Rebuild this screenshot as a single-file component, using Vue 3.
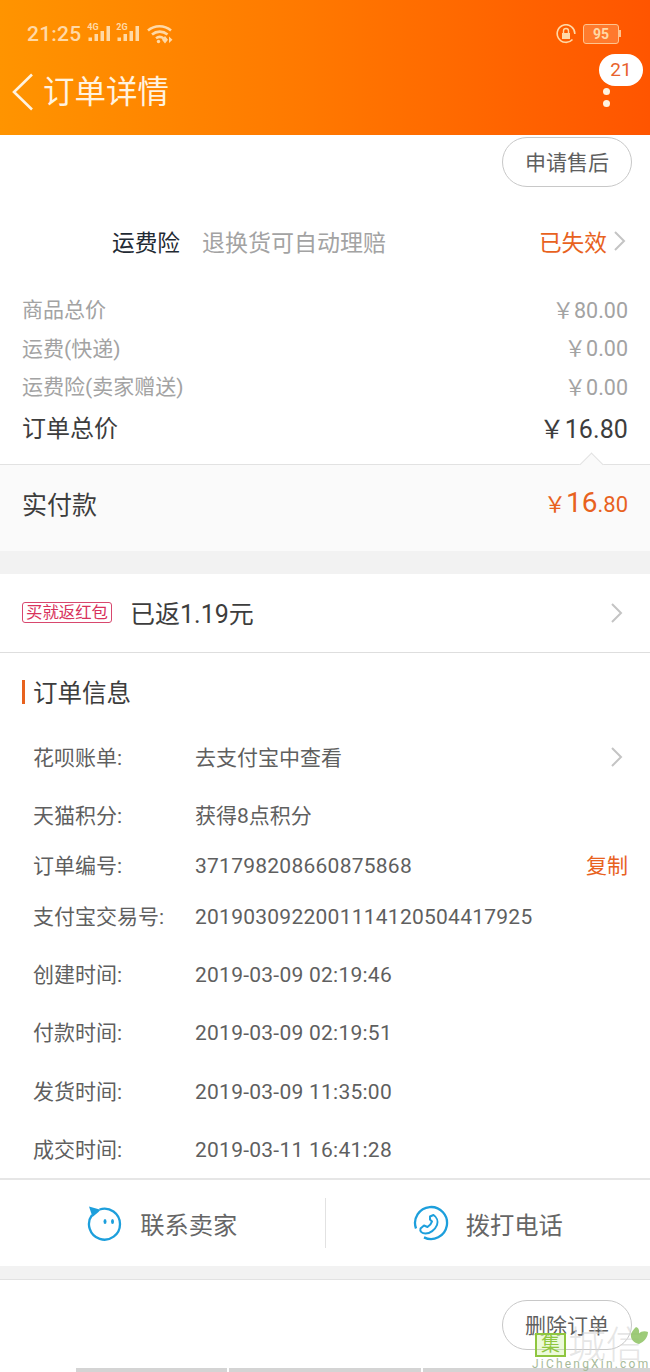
<script setup>
const prices = [
  { label: '商品总价', value: '￥80.00' },
  { label: '运费(快递)', value: '￥0.00' },
  { label: '运费险(卖家赠送)', value: '￥0.00' },
]

const info = [
  { label: '花呗账单:', value: '去支付宝中查看', height: 58, arrow: true },
  { label: '天猫积分:', value: '获得8点积分', height: 50 },
  { label: '订单编号:', value: '371798208660875868', height: 51, copy: true, num: true },
  { label: '支付宝交易号:', value: '2019030922001114120504417925', height: 58, num: true },
  { label: '创建时间:', value: '2019-03-09 02:19:46', height: 58, num: true },
  { label: '付款时间:', value: '2019-03-09 02:19:51', height: 59, num: true },
  { label: '发货时间:', value: '2019-03-09 11:35:00', height: 58, num: true },
  { label: '成交时间:', value: '2019-03-11 16:41:28', height: 43, num: true },
]
</script>

<template>
  <div class="page">
    <header class="header">
      <div class="status">
        <div class="status-left">
          <span class="time">21:25</span>
          <span class="signal">
            <i class="net">4G</i>
            <svg width="23" height="15" viewBox="0 0 23 15"><path d="M.5 11.500H4V15H.5zM6.500 8H10v7H6.500zM12.500 5H16v10h-3.500zM18.500 0H22v15h-3.500z" fill="#ffd9a6"/></svg>
          </span>
          <span class="signal">
            <i class="net">2G</i>
            <svg width="23" height="15" viewBox="0 0 23 15"><path d="M.5 11.500H4V15H.5zM6.500 8H10v7H6.500zM12.500 5H16v10h-3.500zM18.500 0H22v15h-3.500z" fill="#ffd9a6"/></svg>
          </span>
          <svg class="wifi" width="26" height="20" viewBox="0 0 26 20" fill="none" stroke="#ffd9a6" stroke-width="2.600">
            <path d="M1 6.500C7.500 .8 17.500 .8 24 6.500" />
            <path d="M5 10.500c4.500-3.800 11-3.800 15.500 0" />
            <path d="M9 14.200c2.500-1.800 5-1.800 7.500 0" />
            <path d="M18 12l3 3.800-3 3.800-3-3.800zM22 12.500l3.500 3.300-3.500 3.300z" fill="#ffd9a6" stroke="none" />
            <circle cx="11.500" cy="17.500" r="1.700" fill="#ffd9a6" stroke="none" />
          </svg>
        </div>
        <div class="status-right">
          <svg width="20" height="20" viewBox="0 0 20 20" fill="none">
            <path d="M16.500 15.500A8.800 8.800 0 1 1 18.800 10" stroke="#ffd9a6" stroke-width="1.600" />
            <path d="M6 9h8v6H6z" fill="#ffd9a6" />
            <path d="M7.500 9V7a2.500 2.500 0 0 1 5 0v2" stroke="#ffd9a6" stroke-width="1.400" />
          </svg>
          <div class="battery">
            <span class="battery-body">95</span>
            <span class="battery-tip"></span>
          </div>
        </div>
      </div>
      <div class="nav">
        <svg class="back" width="24" height="38" viewBox="0 0 24 38" fill="none">
          <path d="M21 1.500 3 19l18 17.500" stroke="#fff3e0" stroke-width="2.600" />
        </svg>
        <span class="nav-title">订单详情</span>
        <div class="nav-more">
          <span class="badge">21</span>
          <span class="dot"></span>
          <span class="dot"></span>
        </div>
      </div>
    </header>

    <section class="after-sale">
      <button type="button" class="pill">申请售后</button>
    </section>

    <section class="insurance">
      <span class="ins-name">运费险</span>
      <span class="ins-desc">退换货可自动理赔</span>
      <span class="ins-state">已失效</span>
      <svg width="14" height="22" viewBox="0 0 14 22" fill="none"><path d="M2 2l9 9-9 9" stroke="#c4c4c4" stroke-width="2" /></svg>
    </section>

    <section class="prices">
      <div v-for="p in prices" :key="p.label" class="price-row">
        <span>{{ p.label }}</span>
        <span class="price-num">{{ p.value }}</span>
      </div>
      <div class="price-total">
        <span>订单总价</span>
        <span class="total-num">￥16.80</span>
      </div>
    </section>

    <section class="paid">
      <span class="notch"></span>
      <span class="paid-label">实付款</span>
      <span class="paid-num"><small>￥</small><b>16</b><small>.80</small></span>
    </section>

    <div class="gap"></div>

    <section class="rebate">
      <span class="tag">买就返红包</span>
      <span class="rebate-text">已返1.19元</span>
      <svg class="rebate-arrow" width="14" height="22" viewBox="0 0 14 22" fill="none"><path d="M2 2l9 9-9 9" stroke="#c4c4c4" stroke-width="2" /></svg>
    </section>

    <section class="order">
      <h2 class="order-title">订单信息</h2>
      <div
        v-for="row in info"
        :key="row.label"
        class="info-row"
        :style="{ height: row.height + 'px' }"
      >
        <span class="info-label">{{ row.label }}</span>
        <span :class="['info-value', { num: row.num }]">{{ row.value }}</span>
        <svg v-if="row.arrow" class="info-arrow" width="14" height="22" viewBox="0 0 14 22" fill="none"><path d="M2 2l9 9-9 9" stroke="#c4c4c4" stroke-width="2" /></svg>
        <span v-if="row.copy" class="copy">复制</span>
      </div>
    </section>

    <section class="contact">
      <div class="contact-item">
        <svg width="36" height="36" viewBox="0 0 36 36" fill="none">
          <path d="M12.500 4.500A15.500 15.500 0 1 1 5 10" stroke="#1d9fdc" stroke-width="2.300" />
          <path d="M2 1.500l11.500 3.200-2 2.300L5.500 12z" fill="#1d9fdc" />
          <ellipse cx="18" cy="16.500" rx="1.500" ry="2.500" fill="#1d9fdc" />
          <ellipse cx="25.500" cy="16.500" rx="1.500" ry="2.500" fill="#1d9fdc" />
        </svg>
        <span>联系卖家</span>
      </div>
      <div class="contact-line"></div>
      <div class="contact-item">
        <svg width="36" height="36" viewBox="0 0 36 36" fill="none" stroke="#1d9fdc">
          <path d="M3 23.500A16 16 0 1 1 11 32.400" stroke-width="2.300" />
          <path d="M17 11.500 20.500 10C23.500 12 25.500 16 24 20 22 25 17 28.500 12.500 28.500 9 28.500 6.500 26.500 7.500 23.500L11 20.500 14.500 22C16.500 20.500 18.500 18.500 19 16.500L17 14.500Z" stroke-width="2" stroke-linejoin="round" />
        </svg>
        <span>拨打电话</span>
      </div>
    </section>

    <div class="gap-small"></div>

    <section class="footer">
      <button type="button" class="pill">删除订单</button>
      <div class="tabs">
        <span class="tab-a"></span>
        <span class="tab-b"></span>
        <span class="tab-c"></span>
      </div>
      <div class="mark">
        <span class="mark-box">集</span>
        <span class="mark-text">城信</span>
        <svg class="mark-leaf" width="20" height="17" viewBox="0 0 20 17"><path d="M8 0c3 1 3.500 4 3 6.500C13 4 17 3.500 20 5c0 5-4 10-9 12C6 16 2 12 3 7c1-3 3-5 5-7z" fill="#8dc261" opacity=".85" /></svg>
        <span class="mark-en">JiChengXin.com</span>
      </div>
    </section>
  </div>
</template>

<style scoped>
.page {
  width: 650px;
  height: 1372px;
  overflow: hidden;
  background: #fff;
  font-family: Roboto, "Noto Sans CJK SC", sans-serif;
  color: #3d3d3d;
}

.header {
  height: 135px;
  background: linear-gradient(90deg, #ff9400 0%, #ff7a00 45%, #ff5500 100%);
}

.status {
  height: 67px;
  display: flex;
  justify-content: space-between;
  align-items: center;
  padding: 0 29px 0 27px;
}

.status-left,
.status-right {
  display: flex;
  align-items: center;
}

.time {
  font-size: 21px;
  font-weight: 500;
  color: #ffd9a6;
  margin-right: 6px;
  letter-spacing: 0.2px;
}

.signal {
  position: relative;
  display: block;
  width: 25px;
  height: 24px;
  margin: 0 4px 10px 0;
}

.signal svg {
  position: absolute;
  left: 1px;
  bottom: 0;
}

.net {
  position: absolute;
  left: 0;
  top: 6px;
  font-size: 9px;
  font-weight: 700;
  font-style: normal;
  line-height: 9px;
  color: #ffd9a6;
}

.wifi {
  margin-left: 2px;
}

.status-right {
  gap: 7px;
}

.battery {
  display: flex;
  align-items: center;
}

.battery-body {
  display: block;
  width: 34px;
  height: 18px;
  line-height: 18px;
  border: 1px solid #ffc48e;
  border-radius: 3px;
  background: rgba(255, 220, 180, 0.25);
  font-size: 14px;
  font-weight: 700;
  text-align: center;
  color: #ffd9a6;
}

.battery-tip {
  display: block;
  width: 2px;
  height: 7px;
  background: #ffc48e;
}

.nav {
  position: relative;
  height: 68px;
  display: flex;
  align-items: center;
  padding-left: 11px;
}

.back {
  margin-bottom: 18px;
}

.nav-title {
  margin-left: 8px;
  margin-bottom: 16px;
  font-size: 31.500px;
  line-height: 40px;
  color: #fff3e0;
}

.nav-more {
  position: absolute;
  top: -13px;
  right: 7px;
  width: 44px;
  display: flex;
  flex-direction: column;
  align-items: flex-start;
}

.badge {
  width: 44px;
  height: 32px;
  line-height: 32px;
  border-radius: 17px;
  background: #fff;
  color: #e8622c;
  font-size: 19px;
  text-align: center;
  margin-bottom: 2px;
}

.dot {
  width: 7px;
  height: 7px;
  margin-left: 4px;
  border-radius: 50%;
  background: #fff3e0;
  margin-bottom: 5px;
}

.after-sale {
  height: 55px;
  box-sizing: border-box;
  display: flex;
  justify-content: flex-end;
  padding: 2px 18px 0 0;
}

.pill {
  display: block;
  width: 130px;
  height: 50px;
  padding: 0 0 2px;
  border: 1px solid #c8c8c8;
  border-radius: 25px;
  background: transparent;
  font: inherit;
  font-size: 21px;
  color: #5f5f5f;
}

.insurance {
  height: 99px;
  box-sizing: border-box;
  display: flex;
  align-items: center;
  padding: 3px 23px 0 112px;
}

.ins-name {
  font-size: 22.700px;
  color: #1f2a33;
}

.ins-desc {
  margin-left: 22px;
  font-size: 23px;
  color: #a3a3a3;
}

.ins-state {
  margin-left: auto;
  margin-right: 6px;
  font-size: 22.700px;
  color: #e8621e;
}

.prices {
  height: 175px;
  padding: 0 22px;
  box-sizing: border-box;
}

.price-row {
  height: 38.500px;
  display: flex;
  justify-content: space-between;
  align-items: center;
  font-size: 21px;
  color: #a3a3a3;
}

.price-num {
  font-size: 21.500px;
}

.price-total {
  height: 42px;
  margin-top: 1px;
  display: flex;
  justify-content: space-between;
  align-items: center;
  font-size: 24px;
  color: #3d3d3d;
}

.total-num {
  font-size: 25px;
  letter-spacing: 0.1px;
}

.paid {
  position: relative;
  height: 87px;
  border-top: 1px solid #e2e2e2;
  background: #fafafa;
  display: flex;
  justify-content: space-between;
  align-items: center;
  padding: 0 22px 10px;
  box-sizing: border-box;
}

.notch {
  position: absolute;
  top: -9px;
  right: 50px;
  width: 16px;
  height: 16px;
  background: #fafafa;
  border-top: 1px solid #e2e2e2;
  border-left: 1px solid #e2e2e2;
  transform: rotate(45deg);
}

.paid-label {
  font-size: 25px;
  color: #3d3d3d;
}

.paid-num {
  color: #e8621e;
  line-height: 1;
}

.paid-num small {
  font-size: 22px;
}

.paid-num b {
  font-size: 28px;
  font-weight: 400;
}

.gap {
  height: 23px;
  background: #f2f2f2;
}

.rebate {
  height: 79px;
  box-sizing: border-box;
  border-bottom: 1px solid #dedede;
  display: flex;
  align-items: center;
  padding: 0 26px 0 22px;
}

.tag {
  height: 21px;
  line-height: 20px;
  box-sizing: border-box;
  width: 90px;
  margin-bottom: 2px;
  border: 1px solid #d8476e;
  border-radius: 3px;
  font-size: 16.400px;
  text-align: center;
  color: #d8325c;
  white-space: nowrap;
}

.rebate-text {
  margin: 0 0 2px 18px;
  font-size: 25px;
  color: #3d3d3d;
}

.rebate-arrow {
  margin-left: auto;
}

.order {
  padding: 0 22px;
}

.order-title {
  position: relative;
  margin: 0 0 15px;
  height: 75px;
  line-height: 81px;
  padding-left: 11px;
  font-size: 24.500px;
  font-weight: 400;
  color: #3d3d3d;
}

.order-title::before {
  content: "";
  position: absolute;
  left: 0;
  top: 27px;
  width: 3px;
  height: 24px;
  background: #e8621e;
}

.info-row {
  display: flex;
  align-items: baseline;
  padding-left: 11px;
  font-size: 21px;
  line-height: 30px;
  color: #5f5f5f;
}

.info-label {
  width: 162px;
  flex: none;
}

.info-value {
  flex: 1;
}

.info-value.num {
  letter-spacing: 0.25px;
}

.info-arrow {
  align-self: flex-start;
  margin: 3px 4px 0 0;
}

.copy {
  color: #e8621e;
}

.contact {
  height: 88px;
  box-sizing: border-box;
  border-top: 2px solid #e6e6e6;
  display: flex;
  align-items: center;
  font-size: 24.300px;
  color: #666;
}

.contact-item {
  flex: 1;
  display: flex;
  align-items: center;
  justify-content: center;
  gap: 17px;
}

.contact-line {
  width: 1px;
  height: 50px;
  background: #e2e2e2;
}

.gap-small {
  height: 14px;
  background: #f2f2f2;
  border-bottom: 1px solid #e2e2e2;
  box-sizing: border-box;
}

.footer {
  position: relative;
  height: 92px;
  display: flex;
  justify-content: flex-end;
  padding: 20px 18px 0 0;
  box-sizing: border-box;
}

.tabs {
  position: absolute;
  left: 76px;
  right: 0;
  bottom: 0;
  height: 4px;
  display: flex;
  gap: 2px;
}

.tab-a {
  width: 151px;
  background: #d4d4d4;
}

.tab-b {
  width: 192px;
  background: #d4d4d4;
}

.tab-c {
  flex: 1;
  background: #d4d4d4;
}

.mark {
  position: absolute;
  left: 532px;
  top: 47px;
  width: 118px;
  height: 45px;
}

.mark-box {
  position: absolute;
  left: 3px;
  top: 6px;
  width: 31px;
  height: 24px;
  box-sizing: border-box;
  border: 2px solid #8fc63f;
  background: rgba(200, 240, 150, 0.35);
  font-size: 19px;
  line-height: 20px;
  text-align: center;
  color: #8fc63f;
}

.mark-text {
  position: absolute;
  left: 36px;
  top: -2px;
  font-size: 38px;
  line-height: 40px;
  font-weight: 300;
  color: rgba(215, 215, 215, 0.65);
  white-space: nowrap;
}

.mark-leaf {
  position: absolute;
  left: 96px;
  top: 0;
}

.mark-en {
  position: absolute;
  left: 0;
  top: 31px;
  font-size: 12px;
  line-height: 13px;
  letter-spacing: 2.200px;
  color: #a8bb9a;
  white-space: nowrap;
}
</style>

<style>
html, body {
  margin: 0;
  background: #fff;
}
</style>
